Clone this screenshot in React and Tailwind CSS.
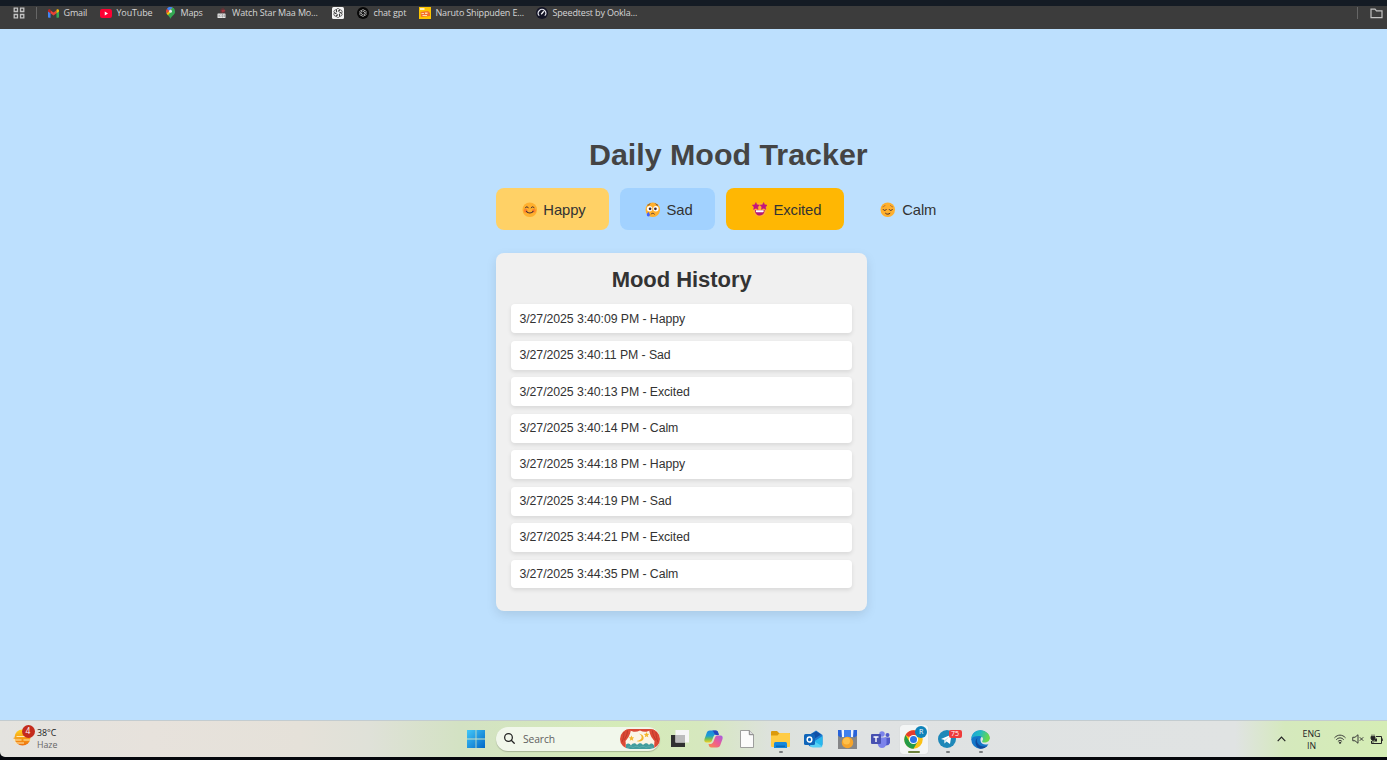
import React from 'react';

const rows = [
  ['3/27/2025 3:40:09 PM', 'Happy'],
  ['3/27/2025 3:40:11 PM', 'Sad'],
  ['3/27/2025 3:40:13 PM', 'Excited'],
  ['3/27/2025 3:40:14 PM', 'Calm'],
  ['3/27/2025 3:44:18 PM', 'Happy'],
  ['3/27/2025 3:44:19 PM', 'Sad'],
  ['3/27/2025 3:44:21 PM', 'Excited'],
  ['3/27/2025 3:44:35 PM', 'Calm'],
];

/* ---------- bookmark icons ---------- */

const AppsIcon = () => (
  <svg className="h-3 w-3" viewBox="0 0 12 12" fill="none" stroke="#c3c3c3" strokeWidth="1.3">
    <path d="M1.2 1.2h3.3v3.3H1.2zM7.5 1.2h3.3v3.3H7.5zM1.2 7.5h3.3v3.3H1.2zM7.5 7.5h3.3v3.3H7.5z" />
  </svg>
);

const GmailIcon = () => (
  <svg className="h-[9px] w-[11px]" viewBox="0 0 22 17">
    <path d="M0 3v12.500a1.500 1.500 0 0 0 1.500 1.500H5V7z" fill="#4285f4" />
    <path d="M22 3v12.500a1.500 1.500 0 0 1-1.500 1.500H17V7z" fill="#34a853" />
    <path d="M5 1.800 11 6.500l6-4.700V8l-6 4.700L5 8z" fill="#ea4335" />
    <path d="M0 3C0 .3 3-.8 5 1.200V8L0 4.300z" fill="#c5221f" />
    <path d="M22 3c0-2.700-3-3.800-5-1.800V8l5-3.700z" fill="#fbbc04" />
  </svg>
);

const YouTubeIcon = () => (
  <svg className="h-[9px] w-3" viewBox="0 0 24 18">
    <rect width="24" height="18" rx="4.500" fill="#ff0033" />
    <path d="M9.500 5.200v7.600l6.500-3.800z" fill="#fff" />
  </svg>
);

const MapsIcon = () => (
  <svg className="h-3 w-[9px]" viewBox="0 0 18 24">
    <path d="M9 24C8 19 0 15 0 8.500h18C18 15 10 19 9 24z" fill="#34a853" />
    <path d="M1.200 13 12 1l3.800 2.200L4 16.500z" fill="#fbbc04" />
    <path d="M12 .6a9 9 0 0 1 6 8.400c0 3-1.700 5-3.500 7L9 9z" fill="#34a853" />
    <path d="M2 3.300A9 9 0 0 0 1.200 13L7 7z" fill="#ea4335" />
    <path d="M2 3.300A9 9 0 0 1 13 .9L9 5.500 5.500 7z" fill="#4285f4" />
    <circle cx="9" cy="8.700" r="3" fill="#e9eef5" />
  </svg>
);

const MovieIcon = () => (
  <svg className="h-3 w-[10px]" viewBox="0 0 20 24">
    <path d="M6 7c1-4 5-6 9-6l-2 5 4 4-2 3H7z" fill="#5b3438" />
    <path d="m9 6 6-1 2 3-7 3z" fill="#a2343c" />
    <rect x="1" y="13" width="16" height="9" rx="1" fill="#e5e5e5" />
    <path d="M4 15v5m3-5-2 2.500L7 20m3-5v5h2v-5zm5 0v5" stroke="#888" strokeWidth="1.200" fill="none" />
  </svg>
);

const KnotIcon = ({ stroke }) => (
  <g fill="none" stroke={stroke} strokeWidth="1.300">
    {[0, 60, 120, 180, 240, 300].map((a) => (
      <path key={a} transform={`rotate(${a} 12 12)`} d="M12 8.400 15.800 6.200a3.900 3.900 0 0 0-6.800-1.700v6.200" />
    ))}
  </g>
);

const KnotTile = () => (
  <svg className="h-3 w-3" viewBox="0 0 24 24">
    <rect width="24" height="24" rx="3" fill="#f4f4f4" />
    <KnotIcon stroke="#222" />
  </svg>
);

const KnotRound = () => (
  <svg className="h-3 w-3" viewBox="0 0 24 24">
    <circle cx="12" cy="12" r="12" fill="#080808" />
    <g transform="translate(2.400 2.400) scale(.8)"><KnotIcon stroke="#ddd" /></g>
  </svg>
);

const AnimeIcon = () => (
  <svg className="h-3 w-3" viewBox="0 0 24 24">
    <rect width="24" height="24" fill="#fdc400" />
    <path d="M2 2h9v4H2z" fill="#fff0ba" />
    <path d="m3 10 15-2 4 4v6l-18 2z" fill="#f4702c" />
    <path d="M5 12h5v2H5zm7-1h5v3h-5zm-5 5h9v2H7z" fill="#ffd9ae" />
  </svg>
);

const SpeedIcon = () => (
  <svg className="h-3 w-3" viewBox="0 0 24 24">
    <circle cx="12" cy="12" r="12" fill="#141526" />
    <path d="M6.500 17.500a7.500 7.500 0 1 1 11 0" fill="none" stroke="#e8e8f0" strokeWidth="2.200" />
    <path d="m10.500 14.500 5-6" stroke="#fff" strokeWidth="2.400" />
  </svg>
);

const FolderOutline = () => (
  <svg className="h-[11px] w-[13px]" viewBox="0 0 13 11" fill="none" stroke="#c3c3c3" strokeWidth="1.200">
    <path d="M1 1.200h4l1.500 1.700H12v6.800H1z" />
  </svg>
);

/* ---------- mood faces ---------- */

const faceClass = 'mt-[2px] h-[15.500px] w-[15.500px] shrink-0';

const HappyFace = () => (
  <svg className={faceClass} viewBox="0 0 32 32" fill="none" strokeLinecap="round">
    <circle cx="16" cy="16" r="15" fill="#ffb02e" />
    <circle cx="7.500" cy="18" r="4" fill="#ff822d" />
    <circle cx="24.500" cy="18" r="4" fill="#ff822d" />
    <path d="M7 12c1-3 5-3 6 0M19 12c1-3 5-3 6 0" stroke="#402a32" strokeWidth="2" />
    <path d="M9 19c3 5 11 5 14 0" stroke="#402a32" strokeWidth="2.200" />
  </svg>
);

const SadFace = () => (
  <svg className={faceClass} viewBox="0 0 32 32" fill="none" strokeLinecap="round">
    <circle cx="16" cy="16" r="15" fill="#ffb02e" />
    <circle cx="9.500" cy="14" r="5.500" fill="#fff" />
    <circle cx="22.500" cy="14" r="5.500" fill="#fff" />
    <circle cx="10.500" cy="14" r="2.800" fill="#402a32" />
    <circle cx="21.500" cy="14" r="2.800" fill="#402a32" />
    <path d="M6 6.500c1.500-.2 3-1 4-2.500M26 6.500c-1.500-.2-3-1-4-2.500M12.500 25c2-2.500 5-2.500 7 0" stroke="#402a32" strokeWidth="1.700" />
    <path d="M7 20c-2 3-3.300 4.500-3.300 6.500a3.200 3.200 0 0 0 6.500 0c0-2-2-3.500-3.200-6.500z" fill="#3f5fff" />
  </svg>
);

const ExcitedFace = () => (
  <svg className={faceClass} viewBox="0 0 32 32">
    <circle cx="16" cy="16" r="14.500" fill="#ffb02e" />
    <path d="m8 1 2.300 4.700 5.200.8-3.800 3.600.9 5.200L8 13l-4.700 2.300.9-5.200L.5 6.500l5.200-.8zM24 1l2.300 4.700 5.200.8-3.700 3.600.9 5.200L24 13l-4.600 2.300.9-5.200-3.800-3.600 5.200-.8z" fill="#c3157d" stroke="#c3157d" strokeWidth="1" strokeLinejoin="round" />
    <path d="M6 16.500h20c0 6.500-4 11.500-10 11.500S6 23 6 16.500z" fill="#b51873" />
    <path d="M8 17h16v2.600a1.500 1.500 0 0 1-1.500 1.500h-13A1.500 1.500 0 0 1 8 19.600z" fill="#fff" />
  </svg>
);

const CalmFace = () => (
  <svg className={faceClass} viewBox="0 0 32 32" fill="none" strokeLinecap="round">
    <circle cx="16" cy="16" r="15" fill="#ffb02e" />
    <path d="M6 10c1.500-.3 3.500-1.300 4.500-3M26 10c-1.500-.3-3.500-1.300-4.500-3" stroke="#a5602e" strokeWidth="1.600" />
    <path d="M6.500 15.500c1.500 2.800 5 2.800 6.500 0M19 15.500c1.500 2.800 5 2.800 6.500 0" stroke="#402a32" strokeWidth="2" />
    <path d="M11.500 23.500c2.500 2.300 6.500 2.300 9 0" stroke="#402a32" strokeWidth="2" />
  </svg>
);

/* ---------- taskbar icons ---------- */

const HazeIcon = () => (
  <svg className="h-[17px] w-[18px]" viewBox="0 0 36 34">
    <defs>
      <linearGradient id="haze" x1="0" y1="0" x2="0" y2="1">
        <stop offset="0" stopColor="#ffd21e" />
        <stop offset="1" stopColor="#ee700f" />
      </linearGradient>
    </defs>
    <circle cx="19" cy="17" r="16" fill="url(#haze)" />
    <path d="M7 15h19M0 22h17m4 0h14M3 28h19" stroke="#ffe9b0" strokeWidth="2" />
    <path d="M1 18.500h12" stroke="#f3a52d" strokeWidth="2" />
  </svg>
);

const StartIcon = () => (
  <svg className="h-[18px] w-[18px]" viewBox="0 0 18 18">
    <defs>
      <linearGradient id="win" x1="0" y1="0" x2="1" y2="1">
        <stop offset="0" stopColor="#43c8f8" />
        <stop offset="1" stopColor="#0067c8" />
      </linearGradient>
    </defs>
    <path d="M0 0h8.600v8.600H0zM9.400 0H18v8.600H9.400zM0 9.400h8.600V18H0zM9.400 9.400H18V18H9.400z" fill="url(#win)" />
  </svg>
);

const TheatreIcon = () => (
  <svg className="h-5 w-10" viewBox="0 0 80 40">
    <defs>
      <clipPath id="pill"><rect width="80" height="40" rx="20" /></clipPath>
    </defs>
    <g clipPath="url(#pill)">
      <rect width="80" height="40" fill="#fbf5e6" />
      <path d="M0 0h80v3c-8 3-14 2-19-1-6 4-13 5-21 1-8 4-15 3-21-1-5 3-11 4-19 1z" fill="#d94a36" />
      <path d="M0 0h22c-2 14-6 18-11 24 1 6 0 11 1 16H0zM80 0H58c2 14 6 18 11 24-1 6 0 11-1 16h12z" fill="#dc4a36" />
      <path d="M8 6c0 10-2 14-4 20M15 3c0 9-4 14-7 19M72 6c0 10 2 14 4 20M65 3c0 9 4 14 7 19" stroke="#b5342a" strokeWidth="1.500" fill="none" />
      <path d="M37 9c9 3 9 14-4 15 14 6 22-12 4-15z" fill="#f3b62c" />
      <path d="m23 13 1.600 3.600 3.900.3-3 2.600 1 3.800-3.500-2-3.400 2 1-3.800-3-2.600 3.800-.3zM53 6l1.600 3.600 3.900.3-3 2.600 1 3.800-3.500-2-3.400 2 1-3.800-3-2.600 3.800-.3z" fill="#f3b62c" />
      <path d="M12 31c4-4 8-2 10 2 3-5 9-6 12-1 4-5 9-5 12 0 4-5 9-5 12 0 3-4 7-4 10 1v8H12z" fill="#439d9e" />
      <path d="M15 37c5-3 8-2 11 0 5-3 9-3 13 0 5-3 9-3 13 0 4-2 8-2 13 0" stroke="#62b0ae" strokeWidth="1.600" fill="none" />
    </g>
  </svg>
);

const TaskViewIcon = () => (
  <svg className="h-[18px] w-[18px]" viewBox="0 0 18 18">
    <rect x="0" y="5" width="14" height="12" fill="#303030" />
    <rect x="4.500" y="0" width="13.500" height="12.500" fill="#f6f6f6" />
    <rect x="4.500" y="5" width="9.500" height="7.500" fill="#bcbcbc" />
  </svg>
);

const CopilotIcon = () => (
  <svg className="h-[18px] w-[19px]" viewBox="0 0 38 36">
    <defs>
      <linearGradient id="cpa" x1="0" y1="0" x2="0" y2="1">
        <stop offset="0" stopColor="#1a86e0" />
        <stop offset=".45" stopColor="#1e9fd0" />
        <stop offset=".7" stopColor="#6fc153" />
        <stop offset="1" stopColor="#f5cf24" />
      </linearGradient>
      <linearGradient id="cpb" x1="1" y1="0" x2="0" y2="1">
        <stop offset="0" stopColor="#a45ce6" />
        <stop offset=".5" stopColor="#ee5c90" />
        <stop offset="1" stopColor="#fc8a4a" />
      </linearGradient>
    </defs>
    <path d="M12 1h11c4 0 5 2 6 7h-3c-3 0-5 1-7 5l-3 8c-1 3-3 4-6 4H5c-4 0-5-3-4-7L5 7c1-4 3-6 7-6z" fill="url(#cpa)" />
    <path d="M16 1h7c4 0 5 2 6 6l1 3h-6c-4 0-4-9-8-9z" fill="#2446bf" />
    <path d="M26 35H15c-4 0-5-2-6-7h3c3 0 5-1 7-5l3-8c1-3 3-4 6-4h5c4 0 5 3 4 7l-4 11c-1 4-3 6-7 6z" fill="url(#cpb)" />
  </svg>
);

const DocumentIcon = () => (
  <svg className="h-[18px] w-[14px]" viewBox="0 0 14 18">
    <path d="M.5.5h8.800l4.200 4.200v12.800H.5z" fill="#fbfbfb" stroke="#949494" strokeWidth=".9" />
    <path d="M9.300.5v4.200h4.200" fill="#ddd" stroke="#777" strokeWidth=".9" />
  </svg>
);

const ExplorerIcon = () => (
  <svg className="h-[17px] w-[19px]" viewBox="0 0 38 34">
    <path d="M0 2q0-2 2-2h10l4 4h20q2 0 2 2v6H0z" fill="#dc9a0c" />
    <path d="M0 9h13l4-5h19q2 0 2 2v24q0 2-2 2H2q-2 0-2-2z" fill="#ffcc45" />
    <path d="M6 34V25q0-3 3-3h20q3 0 3 3v9z" fill="#1688dc" />
    <path d="M10 29h18v3H10z" fill="#0b68b8" />
  </svg>
);

const OutlookIcon = () => (
  <svg className="h-[18px] w-[19px]" viewBox="0 0 38 36">
    <path d="M9 11 24 1l13 9v17q0 6-6 6H14q-5 0-5-5z" fill="#1b78cf" />
    <path d="M12 9 25 3l9 6-20 13z" fill="#1150a6" />
    <path d="m37 12-23 15v4q1 3 4 3h14q5 0 5-6z" fill="#28b8ee" />
    <path d="m15 19 22 14q-1 2-5 2H18q-6 0-6-6z" fill="#57d0f5" />
    <rect x="0" y="8" width="22" height="22" rx="3" fill="#0f65b9" />
    <ellipse cx="11" cy="19" rx="4.600" ry="5.200" fill="none" stroke="#fff" strokeWidth="3" />
  </svg>
);

const MedalIcon = () => (
  <svg className="h-[19px] w-[19px]" viewBox="0 0 38 38">
    <rect width="38" height="38" fill="#858688" />
    <path d="M0 0h9v13l-4 2-5-4zM38 0h-9v13l4 2 5-4z" fill="#2863da" />
    <path d="M7 0h5v14H8zM31 0h-5v14h4z" fill="#edf3ff" />
    <path d="M12 0h14v15H12z" fill="#3f80ef" />
    <circle cx="19" cy="25" r="11.500" fill="#f6a42a" />
    <circle cx="17" cy="22" r="7" fill="#ffc04a" />
  </svg>
);

const TeamsIcon = () => (
  <svg className="h-[17px] w-[19px]" viewBox="0 0 38 34">
    <circle cx="22" cy="6" r="5.500" fill="#7b83eb" />
    <circle cx="33" cy="8" r="4" fill="#5059c9" />
    <path d="M27 13h11v11q-2 5-8 5h-3z" fill="#5059c9" />
    <path d="M13 13h18v12q-2 9-9 9t-9-9z" fill="#7b83eb" />
    <rect x="0" y="6" width="20" height="20" rx="2" fill="#4750b1" />
    <path d="M5 12h10M10 12v10" stroke="#fff" strokeWidth="2.800" />
  </svg>
);

const ChromeIcon = () => (
  <svg className="h-[19px] w-[19px]" viewBox="0 0 38 38">
    <circle cx="19" cy="19" r="18.500" fill="#fbc116" />
    <path d="M19 19 3 9.750A18.500 18.500 0 0 1 35 9.750H19z" fill="#e33b2e" />
    <path d="M3 9.750A18.500 18.500 0 0 0 19 37.500L27 23.600 19 19 11 23.600z" fill="#249b48" />
    <circle cx="19" cy="19" r="9.200" fill="#fff" />
    <circle cx="19" cy="19" r="7" fill="#2c75e8" />
  </svg>
);

const TelegramIcon = () => (
  <svg className="h-[18px] w-[18px]" viewBox="0 0 36 36">
    <circle cx="18" cy="18" r="18" fill="#1e88b9" />
    <path d="m6 18 21-9-3 19-7-5-4 4v-7z" fill="#fff" />
    <path d="m13 20 10-7-7 8-3 6z" fill="#c5dfeb" />
  </svg>
);

const EdgeIcon = () => (
  <svg className="h-[19px] w-[19px]" viewBox="0 0 38 38">
    <defs>
      <linearGradient id="ea" x1="0" y1="0" x2="1" y2=".3">
        <stop offset="0" stopColor="#1c9fdc" />
        <stop offset=".5" stopColor="#23bbc1" />
        <stop offset="1" stopColor="#68d94b" />
      </linearGradient>
    </defs>
    <circle cx="19" cy="19" r="18.500" fill="#1476c9" />
    <path d="M14 15c-5 5-2 18 13 18 3 0 6-1 8-4-4 6-10 8.500-16 8.500C9 36 5 20 14 15z" fill="#114a9c" />
    <path d="M20 15c-3 5 0 15 10 14 3 0 5-1 8-3v-8l-14-6z" fill="#e1e5e6" />
    <path d="M.6 18C1 7 9 .5 19 .5S37.500 8 37.500 16c0 6-5 9-10 9-4 0-6-1-5-3 4-5 0-10-7-10C8 12 2 14 .6 18z" fill="url(#ea)" />
  </svg>
);

const Slot = ({ children, dot }) => (
  <div className="relative flex h-full w-[33.4px] shrink-0 items-center justify-center">
    {children}
    {dot && <span className="absolute bottom-[4px] left-[15px] h-[2px] w-1 rounded-full bg-[#777b7d]" />}
  </div>
);

const Bookmark = ({ icon, label, width, gap = 'gap-[5px]' }) => (
  <div className={`flex h-[14px] shrink-0 items-center ${gap} ${width}`}>
    {icon}
    {label && <span className="whitespace-nowrap">{label}</span>}
  </div>
);

export default function App() {
  return (
    <div className="flex h-[760px] w-[1387px] flex-col overflow-hidden bg-[#05070c]">
      <div className="h-[6px] shrink-0 bg-[#141b24]" />
      <header className="flex h-[23px] shrink-0 items-start bg-[#3c3c3c] pl-[13px] font-['Open_Sans','Noto_Sans',sans-serif] text-[9px] leading-[14px] tracking-[-0.160px] text-[#d6d6d6]">
        <Bookmark icon={<AppsIcon />} width="w-[22.500px]" />
        <span className="mt-[1px] mr-[11px] h-3 w-px bg-[#666]" />
        <Bookmark icon={<GmailIcon />} label="Gmail" width="w-[52px]" />
        <Bookmark icon={<YouTubeIcon />} label="YouTube" width="w-[66px]" />
        <Bookmark icon={<MapsIcon />} label="Maps" width="w-[51px]" gap="gap-[6px]" />
        <Bookmark icon={<MovieIcon />} label="Watch Star Maa Mo..." width="w-[115px]" gap="gap-[5.500px]" />
        <Bookmark icon={<KnotTile />} width="w-[25px]" />
        <Bookmark icon={<KnotRound />} label="chat gpt" width="w-[62px]" gap="gap-[5px]" />
        <Bookmark icon={<AnimeIcon />} label="Naruto Shippuden E..." width="w-[117px]" />
        <Bookmark icon={<SpeedIcon />} label="Speedtest by Ookla..." width="w-[110px]" gap="gap-[5px]" />
        <div className="ml-auto flex h-[14px] items-center gap-3 pr-1">
          <span className="h-3 w-px bg-[#666]" />
          <FolderOutline />
        </div>
      </header>

      <main className="flex h-[691px] shrink-0 flex-col bg-[#bde0fe] pt-[107px] pl-[496.300px] font-['Liberation_Sans',Arial,sans-serif] text-[#333]">
        <div className="w-[464px]">
          <h1 className="text-center text-[30.400px] leading-[36px] font-bold whitespace-nowrap text-[#444]">Daily Mood Tracker</h1>
          <div className="mt-[15.600px] flex gap-[11.300px] text-[14.800px] tracking-[-0.080px]">
            <button className="flex h-[42.300px] w-[112.700px] items-center gap-[6.200px] rounded-[8px] bg-[#ffd166] pl-[25.300px]"><HappyFace /><span className="mt-[3px]">Happy</span></button>
            <button className="flex h-[42.300px] w-[94.900px] items-center gap-[6.200px] rounded-[8px] bg-[#a2d2ff] pl-[24.600px]"><SadFace /><span className="mt-[3px]">Sad</span></button>
            <button className="flex h-[42.300px] w-[117.700px] items-center gap-[6.200px] rounded-[8px] bg-[#ffb703] pl-[25.300px]"><ExcitedFace /><span className="mt-[3px]">Excited</span></button>
            <button className="flex h-[42.300px] w-[104px] items-center gap-[6.200px] rounded-[8px] pl-[25px]"><CalmFace /><span className="mt-[3px]">Calm</span></button>
          </div>
        </div>
        <section className="mt-[23.100px] h-[358px] w-[370.700px] rounded-[8px] bg-[#f0f0f0] px-[15.200px] pt-[14px] shadow-[0_4px_11px_rgba(0,0,0,0.1)]">
          <h2 className="text-center text-[22px] leading-[26px] font-bold tracking-[-0.050px]">Mood History</h2>
          <ul className="mt-[11.500px] flex flex-col gap-[7.600px] text-[12.300px] tracking-[-0.070px]">
            {rows.map(([time, mood]) => (
              <li key={time} className="flex h-[28.850px] items-center rounded-[4px] bg-white pl-[8px] shadow-[0_2px_4px_rgba(0,0,0,0.1)]">
                {time} - {mood}
              </li>
            ))}
          </ul>
        </section>
      </main>

      <footer className="flex h-[37px] shrink-0 rounded-bl-[5px] border-t border-[#c3ccd0] bg-[linear-gradient(90deg,#e4e3df_0px,#e7e2dc_150px,#e5e1d9_300px,#dfe1d8_370px,#d3e2c3_460px,#d5ebb8_620px,#d6e8be_700px,#dde2dc_770px,#dfe2e3_850px,#e0e3e3_1235px,#d5e9bd_1285px,#d5edb5_1387px)] font-['Open_Sans','Noto_Sans',sans-serif] text-[#222]">
        <div className="flex w-[459.600px] shrink-0 pt-[5px] pl-[13px]">
          <div className="relative h-6 w-6 shrink-0 pt-[3px]">
            <HazeIcon />
            <span className="absolute -top-px left-[8.500px] flex h-[13px] w-[13px] items-center justify-center rounded-full bg-[#c42b1c] text-[8.500px] text-white">4</span>
          </div>
          <div className="flex flex-col text-[8.800px] leading-3">
            <span className="mt-[0.500px]">38°C</span>
            <span className="text-[#666]">Haze</span>
          </div>
        </div>
        <Slot><StartIcon /></Slot>
        <div className="mt-[6px] mr-[3px] ml-[3px] flex h-[23.500px] w-[164.500px] shrink-0 items-center rounded-full bg-[#f1f7eb] pr-[0.500px] pl-2 shadow-[0_1px_1px_rgba(0,0,0,0.22)]">
          <svg className="h-[11px] w-[11px]" viewBox="0 0 22 22" fill="none" stroke="#222" strokeWidth="2.500" strokeLinecap="round">
            <circle cx="9" cy="9" r="7.700" />
            <path d="m14.500 14.500 6 6" />
          </svg>
          <span className="mt-px ml-2 text-[10.300px] tracking-[-0.100px] text-[#606060]">Search</span>
          <div className="ml-auto"><TheatreIcon /></div>
        </div>
        <Slot><TaskViewIcon /></Slot>
        <Slot><CopilotIcon /></Slot>
        <Slot><DocumentIcon /></Slot>
        <Slot dot><ExplorerIcon /></Slot>
        <Slot><OutlookIcon /></Slot>
        <Slot><MedalIcon /></Slot>
        <Slot><TeamsIcon /></Slot>
        <Slot>
          <div className="flex h-[29px] w-7 items-center justify-center rounded-[3px] bg-[#f3f5f5] shadow-[0_0_1px_rgba(0,0,0,0.15)]"><ChromeIcon /></div>
          <span className="absolute top-[5px] left-[18px] flex h-3 w-3 items-center justify-center rounded-full bg-[#0e83ba] text-[7px] text-white">R</span>
          <span className="absolute bottom-[4px] left-[11px] h-[2px] w-3 rounded-full bg-[#6d823d]" />
        </Slot>
        <Slot dot>
          <TelegramIcon />
          <span className="absolute top-[9px] left-[18px] flex h-[8px] w-[13px] items-center justify-center rounded-[2px] bg-[#ef3b3b] text-[7px] text-white">75</span>
        </Slot>
        <Slot dot><EdgeIcon /></Slot>
        <div className="ml-auto flex h-full items-center pr-1">
          <svg className="h-[6px] w-[9px]" viewBox="0 0 9 6" fill="none" stroke="#222" strokeWidth="1.200"><path d="m.7 5.200 3.800-4 3.800 4" /></svg>
          <div className="mt-px ml-[11px] w-[29px] text-center text-[8.800px] leading-3">ENG<br />IN</div>
          <svg className="ml-2 h-[10px] w-3" viewBox="0 0 24 20" fill="none" stroke="#333" strokeWidth="1.900" strokeLinecap="round">
            <path d="M1.500 7c6-6.500 15-6.500 21 0M5 11c4-4.500 10-4.500 14 0M8.300 14.500c2-2.300 5.400-2.300 7.400 0" />
            <circle cx="12" cy="17.500" r="1.300" fill="#333" />
          </svg>
          <svg className="ml-[6px] h-[10px] w-3" viewBox="0 0 24 20" fill="none" stroke="#333" strokeWidth="1.900">
            <path d="M1.500 6.500h4.500L12 1.500v17l-6-5H1.500zM15.500 6.500l7 7M22.500 6.500l-7 7" />
          </svg>
          <svg className="ml-[6px] h-[11px] w-[13px]" viewBox="0 0 26 22" fill="none" stroke="#252525" strokeWidth="2">
            <path d="M12 5h11v14H3v-5M24.500 9v5" />
            <path d="M2 5h8v4q-1 4-4 4t-4-4zM4 5V1m4 4V1M6 13v5" fill="#252525" strokeWidth="1.600" />
            <path d="M11 9h3v6H8z" fill="#252525" stroke="none" />
          </svg>
        </div>
      </footer>
    </div>
  );
}
